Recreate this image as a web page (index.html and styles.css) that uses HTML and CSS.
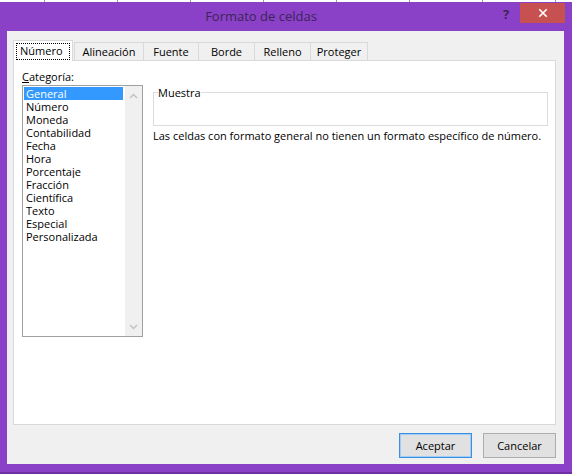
FILE: index.html
```html
<!DOCTYPE html>
<html lang="es">
<head>
<meta charset="utf-8">
<link rel="stylesheet" href="styles.css">
</head>
<body>
<div class="window">
  <div class="sheetstrip"></div>
  <div class="titlebar">
    <div class="title">Formato de celdas</div>
    <div class="help">?</div>
    <div class="close">
      <svg width="12" height="12" viewBox="0 0 12 12"><path d="M1.5 1.5 L10.5 10.5 M10.5 1.5 L1.5 10.5" stroke="#fff" stroke-width="2" fill="none"/></svg>
    </div>
  </div>
  <div class="client">
    <div class="tabs">
      <div class="tab active"><span class="focus">Número</span></div>
      <div class="tab t-alin">Alineación</div>
      <div class="tab t-fuen">Fuente</div>
      <div class="tab t-bord">Borde</div>
      <div class="tab t-rell">Relleno</div>
      <div class="tab t-prot">Proteger</div>
    </div>
    <div class="panel">
      <div class="leftcol">
        <div class="label"><u>C</u>ategoría:</div>
        <div class="listbox">
          <ul class="items">
            <li class="sel">General</li>
            <li>Número</li>
            <li>Moneda</li>
            <li>Contabilidad</li>
            <li>Fecha</li>
            <li>Hora</li>
            <li>Porcentaje</li>
            <li>Fracción</li>
            <li>Científica</li>
            <li>Texto</li>
            <li>Especial</li>
            <li>Personalizada</li>
          </ul>
          <div class="scrollbar">
            <svg class="arrow" width="9" height="6" viewBox="0 0 9 6"><path d="M1 5 L4.5 1.5 L8 5" stroke="#c3c3c3" stroke-width="1.5" fill="none"/></svg>
            <svg class="arrow" width="9" height="6" viewBox="0 0 9 6"><path d="M1 1 L4.5 4.5 L8 1" stroke="#c3c3c3" stroke-width="1.5" fill="none"/></svg>
          </div>
        </div>
      </div>
      <div class="rightcol">
        <fieldset class="sample">
          <legend>Muestra</legend>
        </fieldset>
        <div class="desc">Las celdas con formato general no tienen un formato específico de número.</div>
      </div>
    </div>
    <div class="buttons">
      <div class="btn default">Aceptar</div>
      <div class="btn">Cancelar</div>
    </div>
  </div>
</div>
</body>
</html>
```
FILE: styles.css
```css
html, body {
  margin: 0;
  padding: 0;
}
body {
  width: 572px;
  height: 474px;
  overflow: hidden;
  background: #8b41c7;
  font-family: "Open Sans", "Noto Sans", sans-serif;
  font-size: 11px;
  color: #000;
}
.window {
  display: flex;
  flex-direction: column;
  height: 474px;
  box-sizing: border-box;
  border-bottom: 2px solid #6f2fa3;
}
.sheetstrip {
  height: 2px;
  background: #ffffff repeating-linear-gradient(90deg, transparent 0 44px, #9a9a9a 44px 45px, transparent 45px 73px);
}
.titlebar {
  height: 29px;
  position: relative;
}
.title {
  position: absolute;
  left: 0;
  right: 0;
  top: 5px;
  text-align: center;
  font-size: 13px;
  color: #3c2458;
  padding-right: 50px;
}
.help {
  position: absolute;
  left: 503px;
  top: 3px;
  font-size: 13px;
  font-weight: bold;
  color: #3c2458;
}
.close {
  position: absolute;
  left: 520px;
  top: 1px;
  width: 45px;
  height: 20px;
  background: #c75050;
  display: flex;
  align-items: center;
  justify-content: center;
}
.close svg {
  width: 10px;
  height: 10px;
}
.client {
  margin: 0 8px 0 7px;
  height: 433px;
  background: #f0f0f0;
  box-sizing: border-box;
  padding: 9px 8px 0 6px;
  display: flex;
  flex-direction: column;
}
.tabs {
  display: flex;
  align-items: flex-end;
  height: 20px;
  position: relative;
  z-index: 1;
}
.tab {
  height: 18px;
  box-sizing: border-box;
  border: 1px solid #d9d9d9;
  border-bottom: none;
  background: #f0f0f0;
  padding: 0;
  text-align: center;
  line-height: 17px;
  margin-right: -1px;
  white-space: nowrap;
}
.t-alin { width: 70px; }
.t-fuen { width: 56px; }
.t-bord { width: 57px; }
.t-rell { width: 57px; }
.t-prot { width: 58px; }
.tab.active {
  height: 21px;
  margin-bottom: -1px;
  background: #fff;
  padding: 2px 2px 0 2px;
  line-height: 15px;
  width: 60px;
  margin-right: 1px;
  text-align: left;
}
.focus {
  display: block;
  border: 1px dotted #000;
  padding: 0 0 0 3px;
  height: 15px;
  line-height: 14px;
}
.panel {
  height: 365px;
  box-sizing: border-box;
  border: 1px solid #d9d9d9;
  background: #fff;
  padding: 8px 7px 0 8px;
  display: flex;
  gap: 10px;
}
.leftcol {
  width: 122px;
  display: flex;
  flex-direction: column;
}
.label {
  height: 16px;
  line-height: 16px;
}
.label u {
  text-decoration: underline;
  text-underline-offset: 1px;
}
.listbox {
  height: 252px;
  box-sizing: border-box;
  border: 1px solid #a0a0a0;
  display: flex;
}
.items {
  list-style: none;
  margin: 0;
  padding: 1px 0 0 1px;
  flex: 1;
}
.items li {
  height: 13px;
  line-height: 14px;
  padding-left: 2px;
  overflow: hidden;
}
.items li.sel {
  background: #3399ff;
  color: #fff;
  margin-right: 2px;
}
.scrollbar {
  width: 17px;
  background: #f0f0f0;
  display: flex;
  flex-direction: column;
  justify-content: space-between;
  align-items: center;
  padding: 7px 0 6px;
  box-sizing: border-box;
}
.arrow {
  display: block;
}
.rightcol {
  flex: 1;
  display: flex;
  flex-direction: column;
  padding-top: 17px;
}
.sample {
  margin: 0;
  padding: 0;
  height: 40px;
  box-sizing: border-box;
  border: 1px solid #dcdcdc;
  width: 395px;
}
.sample legend {
  padding: 0;
  margin-left: 4px;
  line-height: 13px;
}
.desc {
  margin-top: 3px;
  line-height: 14px;
  white-space: nowrap;
}
.buttons {
  display: flex;
  justify-content: flex-end;
  gap: 11px;
  margin-top: 8px;
}
.btn {
  width: 73px;
  height: 25px;
  box-sizing: border-box;
  border: 1px solid #adadad;
  background: #e1e1e1;
  display: flex;
  align-items: center;
  justify-content: center;
}
.btn.default {
  border-color: #3c8fdd;
  box-shadow: inset 0 0 0 1px #9fcdf5;
}
```
